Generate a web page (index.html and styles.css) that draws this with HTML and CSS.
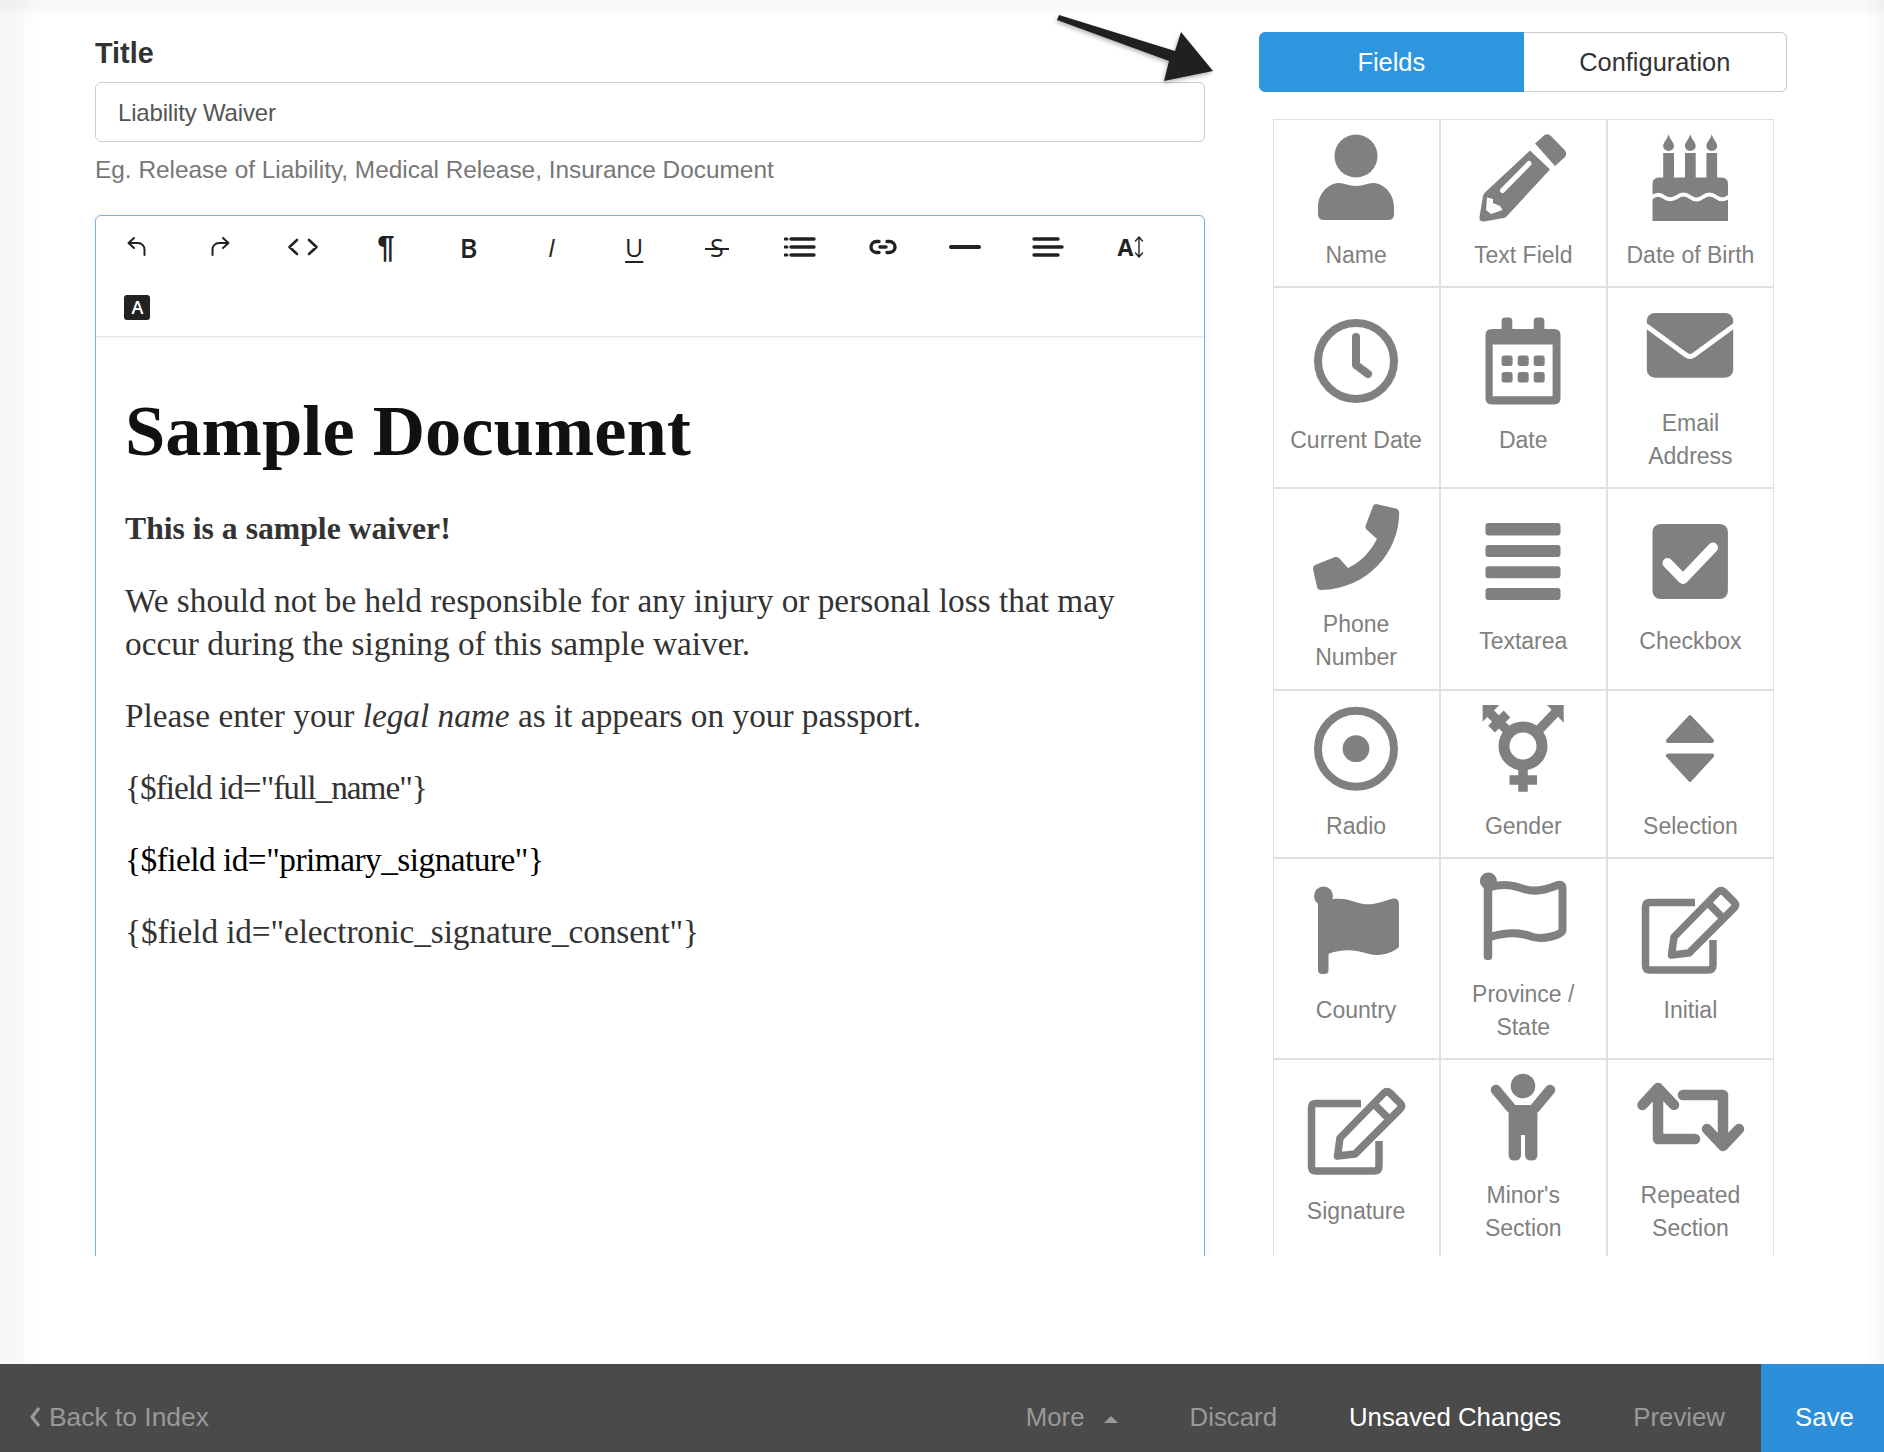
FILE: index.html
```html
<!DOCTYPE html>
<html lang="en">
<head>
<meta charset="utf-8">
<title>Liability Waiver</title>
<link rel="stylesheet" href="styles.css">
</head>
<body>
<div class="page">
  <svg class="arrow" width="180" height="90" viewBox="1045 5 180 90"><polygon points="1059,15 1175,51 1181,32 1213,71 1164,81 1169,61 1057,20"/></svg>
  <main class="workspace">
    <section class="doc">
      <label class="field-label">Title</label>
      <div class="text-input">Liability Waiver</div>
      <p class="hint">Eg. Release of Liability, Medical Release, Insurance Document</p>
      <div class="editor">
        <div class="toolbar">
          <span class="tool"><svg class="ti" viewBox="0 0 24 24"><path d="M9 13 L3.500 8 L9 3 M3.500 8 H13 A6.500 6.500 0 0 1 19.500 14.500 V20"/></svg></span>
          <span class="tool"><svg class="ti" viewBox="0 0 24 24"><path d="M15 13 L20.500 8 L15 3 M20.500 8 H11 A6.500 6.500 0 0 0 4.500 14.500 V20"/></svg></span>
          <span class="tool"><svg class="ti wide code" viewBox="0 0 32 24"><path d="M10 5 L2.500 12 L10 19 M22 5 L29.500 12 L22 19"/></svg></span>
          <span class="tool glyph para">¶</span>
          <span class="tool glyph bold">B</span>
          <span class="tool glyph slant">I</span>
          <span class="tool glyph under"><u>U</u></span>
          <span class="tool glyph strike"><span class="struck">S</span></span>
          <span class="tool"><svg class="ti wide" viewBox="0 0 32 24"><path class="t3" d="M7 4 H30 M7 12 H30 M7 20 H30"/><path class="t2" d="M1 4 H3 M1 12 H3 M1 20 H3"/></svg></span>
          <span class="tool"><svg class="ti wide" viewBox="0 0 32 24"><path class="t3" d="M12 6.500 H9.500 A5.500 5.500 0 0 0 9.500 17.500 H12 M20 6.500 H22.500 A5.500 5.500 0 0 1 22.500 17.500 H20 M13 12 H19"/></svg></span>
          <span class="tool"><svg class="ti wide" viewBox="0 0 32 24"><path class="t4" d="M2 12 H30"/></svg></span>
          <span class="tool"><svg class="ti wide" viewBox="0 0 32 24"><path class="t3" d="M2 4 H26 M2 12 H30 M2 20 H26"/></svg></span>
          <span class="tool glyph size">A<svg class="updown" viewBox="0 0 10 24"><path d="M5 2 V22 M1.500 6 L5 2 L8.500 6 M1.500 18 L5 22 L8.500 18"/></svg></span>
          <span class="tool"><span class="badge">A</span></span>
        </div>
        <div class="body-text">
          <h1>Sample Document</h1>
          <p><strong>This is a sample waiver!</strong></p>
          <p>We should not be held responsible for any injury or personal loss that may occur during the signing of this sample waiver.</p>
          <p>Please enter your <em>legal name</em> as it appears on your passport.</p>
          <p class="token-a">{$field id="full_name"}</p>
          <p class="token-b">{$field id="primary_signature"}</p>
          <p class="token-c">{$field id="electronic_signature_consent"}</p>
        </div>
      </div>
    </section>
    <aside class="side">
      <div class="tabs"><span class="tab active">Fields</span><span class="tab">Configuration</span></div>
      <div class="grid">
        <div class="cell"><svg class="ico" viewBox="0 0 90 90"><circle cx="45" cy="23" r="21.500"/><path d="M13 87 Q7 87 7 81 V74 C7 60 18 50 28 50 C33 50 38 53 45 53 C52 53 57 50 62 50 C72 50 83 60 83 74 V81 Q83 87 77 87 Z"/></svg><span>Name</span></div>
        <div class="cell"><svg class="ico" viewBox="0 0 90 90"><path d="M57 10.500 L66 2.500 Q69.500 0 73 3 L86.500 17 Q89.500 20.500 87 24 L77 33 Z"/><path d="M52 17.500 L72 36.500 L29 83 Q28 84.500 26 85 L6 88.500 Q1 89 1.500 84 L5 63 Q5.500 61 7 59.500 Z"/><path class="cut" d="M24.500 57.500 L51 30.500"/><path class="hole" d="M9 64.500 L15 66 L15 70 L22 73 L24.500 77 L13 81 L8 77 Z"/></svg><span>Text Field</span></div>
        <div class="cell"><svg class="ico" viewBox="0 0 90 90"><path d="M23.600 1 C24.500 6 29 9 29 13 A5.400 5 0 0 1 18.200 13 C18.200 9 22.700 6 23.600 1 Z M45.300 1 C46.200 6 50.700 9 50.700 13 A5.400 5 0 0 1 39.900 13 C39.900 9 44.400 6 45.300 1 Z M66.800 1 C67.700 6 72.200 9 72.200 13 A5.400 5 0 0 1 61.400 13 C61.400 9 65.900 6 66.800 1 Z"/><path d="M18.200 20 H29 V45 H18.200 Z M40 20 H50.700 V45 H40 Z M61.400 20 H72.100 V45 H61.400 Z"/><path d="M7.500 51 Q7.500 44.500 14 44.500 H76.500 Q83 44.500 83 51 V88 H7.500 Z"/><path class="cut wave" d="M6 65 C10 61 15 61 19 64 C23 67 27 67 32 64 C36 61 41 61 45 64 C49 67 54 67 58 64 C62 61 67 61 71 64 C75 67 80 67 85 63"/></svg><span>Date of Birth</span></div>

        <div class="cell"><svg class="ico" viewBox="0 0 90 90"><circle class="ring" cx="45" cy="43" r="38"/><path class="line" d="M45 19 V47 L57 56"/></svg><span>Current Date</span></div>
        <div class="cell"><svg class="ico" viewBox="0 0 90 90"><path d="M27 -0.500 H31 Q34.300 -0.500 34.300 3 V11 H55.700 V3 Q55.700 -0.500 59 -0.500 H63 Q66.400 -0.500 66.400 3 V11 H76 Q82.500 11 82.500 17 V80 Q82.500 86.500 76 86.500 H14 Q7.500 86.500 7.500 80 V17 Q7.500 11 14 11 H23.600 V3 Q23.600 -0.500 27 -0.500 Z M14.700 26.500 V78.200 H74.600 V26.500 Z"/><rect x="23.600" y="37.500" width="11" height="10.500" rx="2.500"/><rect x="39.700" y="37.500" width="11" height="10.500" rx="2.500"/><rect x="55.700" y="37.500" width="11" height="10.500" rx="2.500"/><rect x="23.600" y="54" width="11" height="10.500" rx="2.500"/><rect x="39.700" y="54" width="11" height="10.500" rx="2.500"/><rect x="55.700" y="54" width="11" height="10.500" rx="2.500"/></svg><span>Date</span></div>
        <div class="cell"><svg class="ico" viewBox="0 0 90 90"><rect x="1.800" y="12" width="86.400" height="64.700" rx="8"/><path class="cut" d="M0 24 L41 54 Q45 57 49 54 L90 24"/></svg><span>Email<br>Address</span></div>

        <div class="cell"><svg class="ico" viewBox="0 0 90 90"><path d="M65 2 L85 6.500 Q88.200 7.500 88.200 11 C88 50 57 87 10 88 Q6.500 88 6 85 L2 67 Q2 64 4 63 L24 55 Q26 54.500 28 56 L37 66 C50 60 59 50 66 37 L55.500 27.500 Q54 26 54.500 24 L62 4 Q63 2 65 2 Z"/></svg><span>Phone<br>Number</span></div>
        <div class="cell"><svg class="ico" viewBox="0 0 90 90"><rect x="7.500" y="4" width="75" height="12.500" rx="3"/><rect x="7.500" y="26" width="75" height="12" rx="3"/><rect x="7.500" y="47.300" width="75" height="12" rx="3"/><rect x="7.500" y="69" width="75" height="12" rx="3"/></svg><span>Textarea</span></div>
        <div class="cell"><svg class="ico" viewBox="0 0 90 90"><rect x="7.500" y="5" width="75.400" height="75" rx="8"/><path class="tick" d="M22.500 44 L38 60 L68 28.500"/></svg><span>Checkbox</span></div>

        <div class="cell"><svg class="ico" viewBox="0 0 90 90"><circle class="ring" cx="45" cy="44.700" r="38"/><circle cx="45" cy="44.700" r="13.400"/></svg><span>Radio</span></div>
        <div class="cell"><svg class="ico" viewBox="0 0 90 90"><circle class="ring wide-ring" cx="45" cy="42" r="19"/><path class="bar" d="M45 60 V87.700 M31.500 76 H59 M59 28 L78 8 M31 28 L11 8 M13.500 25 L29 10"/><polygon points="69,1 85.700,1 85.700,18.700"/><polygon points="4.600,1 21.400,1 4.600,17.700"/></svg><span>Gender</span></div>
        <div class="cell"><svg class="ico" viewBox="0 0 90 90"><path class="soft" d="M45 12.500 L67.500 36.500 Q68 37.500 66.500 37.500 H23.500 Q22 37.500 22.500 36.500 Z"/><path class="soft" d="M23.500 51 H66.500 Q68 51 67.500 52 L45 76.500 L22.500 52 Q22 51 23.500 51 Z"/></svg><span>Selection</span></div>

        <div class="cell"><svg class="ico" viewBox="0 0 90 90"><circle cx="12.500" cy="8" r="9.500"/><rect x="7" y="8" width="10.500" height="78" rx="4"/><path d="M17 12 C30 9 38 12 48 15 C60 19 72 13 82 10.500 Q88 10 88 16 V58 C88 62 70 70 58 66 C45 62 32 60 17 66 Z"/></svg><span>Country</span></div>
        <div class="cell"><svg class="ico" viewBox="0 0 90 90"><circle cx="10.400" cy="9" r="8.500"/><rect x="5.700" y="9" width="8.500" height="79" rx="3.500"/><path class="line" d="M12 15 C28 11 36 14 46 17 C58 21 70 17 80 13 Q84.500 12 84.500 16 V58 C84.500 63 65 68 55 65 C42 60 28 60 12 65"/></svg><span>Province /<br>State</span></div>
        <div class="cell"><svg class="ico" viewBox="0 0 90 90"><path class="sq" d="M50 14.500 H5 Q0.500 14.500 0.500 19 V77 Q0.500 82 5 82 H63 Q68 82 68 77 V52"/><path class="sq" d="M29 49 L73 4 Q76 1.500 79 4 L89 14 Q92 17 89 20 L44 65 L26.500 67 Z M62 14 L79 31"/></svg><span>Initial</span></div>

        <div class="cell"><svg class="ico" viewBox="0 0 90 90"><path class="sq" d="M50 14.500 H5 Q0.500 14.500 0.500 19 V77 Q0.500 82 5 82 H63 Q68 82 68 77 V52"/><path class="sq" d="M29 49 L73 4 Q76 1.500 79 4 L89 14 Q92 17 89 20 L44 65 L26.500 67 Z M62 14 L79 31"/></svg><span>Signature</span></div>
        <div class="cell"><svg class="ico" viewBox="0 0 90 90"><circle cx="45" cy="13" r="12.300"/><path class="arm" d="M18 17 L33 35 M72 17 L57 35"/><path d="M30.600 32 H59.400 V82 Q59.400 87.500 53.500 87.500 Q47 87.500 47 82 V62 H43 V82 Q43 87.500 36.500 87.500 Q30.600 87.500 30.600 82 Z"/></svg><span>Minor's<br>Section</span></div>
        <div class="cell"><svg class="ico" viewBox="0 0 90 90"><path class="arm" d="M-2.500 32 L13 15 L29 32 M13 16 V66 H50 M38 22 H78 V72 M62 56 L78 73 L94 56"/></svg><span>Repeated<br>Section</span></div>
      </div>
    </aside>
  </main>
  <div class="spacer"></div>
  <footer class="footer">
    <a class="back"><svg class="chev" viewBox="0 0 12 24"><path d="M10 3 L3 12 L10 21"/></svg>Back to Index</a>
    <span class="fill"></span>
    <a class="item muted">More<i class="caret"></i></a>
    <a class="item muted">Discard</a>
    <a class="item bright">Unsaved Changes</a>
    <a class="item muted">Preview</a>
    <a class="save">Save</a>
  </footer>
</div>
</body>
</html>
```
FILE: styles.css
```css
* { box-sizing: border-box; }
html, body { margin: 0; padding: 0; }
body { font-family: "Liberation Sans", Arial, sans-serif; color: #333; }

.page {
  position: relative;
  width: 1884px;
  height: 1452px;
  display: flex;
  flex-direction: column;
  overflow: hidden;
  background-color: #fff;
  background-image:
    linear-gradient(to right, rgba(0,0,0,.035), rgba(0,0,0,.03) 12px, transparent 36px),
    linear-gradient(to bottom, rgba(0,0,0,.035), rgba(0,0,0,.02) 10px, transparent 18px),
    linear-gradient(to left, rgba(0,0,0,.03), transparent 20px);
}

.arrow {
  position: absolute;
  left: 1045px;
  top: 5px;
  fill: #202020;
  filter: drop-shadow(-1px 2px 2px rgba(0,0,0,.3));
}

.workspace {
  height: 1256px;
  overflow: hidden;
  display: flex;
  padding-left: 95px;
  align-items: flex-start;
}

.doc { width: 1110px; padding-top: 32px; flex: none; }
.field-label { display: block; font-size: 28.8px; font-weight: 700; line-height: 42px; color: #333; margin-bottom: 8px; }
.text-input {
  height: 60px;
  border: 1px solid #ccc;
  border-radius: 6px;
  padding-left: 22px;
  font-size: 24px;
  line-height: 60px;
  letter-spacing: -.17px;
  color: #555;
  background: #fff;
}
.hint { margin: 10.5px 0 29.5px; font-size: 24.4px; line-height: 33px; color: #777; }

.editor {
  min-height: 1100px;
  border: 1px solid #7fb2e8;
  border-radius: 6px 6px 0 0;
  background: #fff;
  box-shadow: 0 0 8px rgba(0,0,0,.06);
}
.toolbar {
  display: flex;
  flex-wrap: wrap;
  height: 121px;
  padding-top: 1px;
  border-bottom: 1px solid #e6e6e6;
  box-shadow: 0 1px 3px rgba(0,0,0,.06);
}
.tool {
  width: 82.8px;
  height: 60px;
  display: flex;
  align-items: center;
  justify-content: center;
  color: #222;
}
.ti { width: 24px; height: 24px; fill: none; stroke: #222; stroke-width: 2; stroke-linecap: round; stroke-linejoin: round; }
.ti.wide { width: 32px; }
.ti.code { stroke-width: 2.600; }
.t2 { stroke-width: 3; }
.t3 { stroke-width: 3.400; }
.t4 { stroke-width: 4; }
.glyph { font-family: "Open Sans", sans-serif; font-size: 25px; line-height: 1; }
.para { font-family: "Liberation Sans", sans-serif; font-weight: 700; font-size: 31px; }
.bold { font-weight: 600; font-size: 27px; }
.slant { font-style: italic; }
.under u { text-decoration-thickness: 2px; text-underline-offset: 4px; }
.struck { position: relative; }
.struck::after {
  content: "";
  position: absolute;
  left: -5px;
  right: -5px;
  top: 53%;
  height: 2px;
  background: #222;
}
.size { font-weight: 700; font-size: 23px; }
.updown { width: 10px; height: 24px; margin-left: 1px; fill: none; stroke: #222; stroke-width: 1.400; stroke-linecap: round; stroke-linejoin: round; }
.badge {
  width: 26px;
  height: 25px;
  border-radius: 3px;
  background: #222;
  color: #fff;
  font-family: "Open Sans", sans-serif;
  font-size: 18px;
  font-weight: 600;
  line-height: 25px;
  text-align: center;
}

.body-text {
  padding: 58px 29px 0;
  font-family: "Liberation Serif", "Times New Roman", serif;
  font-size: 33.3px;
  line-height: 43px;
  color: #333;
}
.body-text h1 {
  margin: 0 0 39px;
  font-size: 72.5px;
  line-height: 72px;
  font-weight: 700;
  color: #111;
}
.body-text p { margin: 0 0 29px; }
.body-text strong { font-size: 31.7px; }
.body-text .token-a { letter-spacing: -1px; }
.body-text .token-b { letter-spacing: -.5px; color: #000; }
.body-text .token-c { letter-spacing: -.1px; }

.side { width: 528px; margin-left: 54px; padding-top: 32px; flex: none; }
.tabs { display: flex; height: 60px; border-radius: 6px; }
.tab {
  flex: 1;
  border: 1px solid #ccc;
  border-left: 0;
  border-radius: 0 6px 6px 0;
  text-align: center;
  font-size: 25.4px;
  line-height: 58px;
  color: #333;
  background: #fff;
}
.tab.active {
  border: 1px solid #2e96df;
  border-radius: 6px 0 0 6px;
  background: #2e96df;
  color: #fff;
}
.grid {
  display: grid;
  grid-template-columns: repeat(3, 1fr);
  margin: 27px 13px 0 13.5px;
}
.cell {
  border: 1px solid #e0e0e0;
  display: flex;
  flex-direction: column;
  align-items: center;
  justify-content: center;
  padding: 13px 0 14.2px;
  text-align: center;
  color: #808080;
  font-size: 23px;
  line-height: 33px;
}
.ico { width: 90px; height: 90px; margin-bottom: 16px; fill: #808080; overflow: visible; flex: none; }
.cut { fill: none; stroke: #fff; stroke-width: 5; stroke-linecap: round; stroke-linejoin: round; }
.cut.wave { stroke-width: 4; }
.hole { fill: #fff; }
.tick { fill: none; stroke: #fff; stroke-width: 10; stroke-linecap: round; stroke-linejoin: round; }
.ring { fill: none; stroke: #808080; stroke-width: 8; }
.wide-ring { stroke-width: 11; }
.line { fill: none; stroke: #808080; stroke-width: 8; stroke-linecap: round; stroke-linejoin: round; }
.bar { fill: none; stroke: #808080; stroke-width: 9.500; stroke-linejoin: round; }
.soft { stroke: #808080; stroke-width: 3; stroke-linejoin: round; }
.sq { fill: none; stroke: #808080; stroke-width: 7.500; stroke-linejoin: round; }
.arm { fill: none; stroke: #808080; stroke-width: 10.500; stroke-linecap: round; stroke-linejoin: round; }

.spacer { height: 108px; flex: none; }

.footer {
  height: 88px;
  flex: none;
  display: flex;
  align-items: stretch;
  background: #4a4a4a;
  font-size: 25.8px;
}
.back { display: flex; align-items: center; padding: 18px 0 0 29px; color: #999; font-size: 26.4px; line-height: 36px; }
.chev { width: 12px; height: 24px; margin-right: 8px; fill: none; stroke: #999; stroke-width: 3.200; }
.fill { flex: 1; }
.item { display: flex; align-items: center; padding: 18px 36px 0; line-height: 36px; }
.muted { color: #999; }
.bright { color: #fff; }
.caret {
  width: 0;
  height: 0;
  margin: 4px 0 0 19px;
  border-left: 7px solid transparent;
  border-right: 7px solid transparent;
  border-bottom: 7px solid #999;
}
.save {
  width: 123px;
  display: flex;
  align-items: center;
  justify-content: center;
  background: #2d8fd9;
  color: #fff;
  padding: 18px 0 0 4px;
  line-height: 36px;
}
```
